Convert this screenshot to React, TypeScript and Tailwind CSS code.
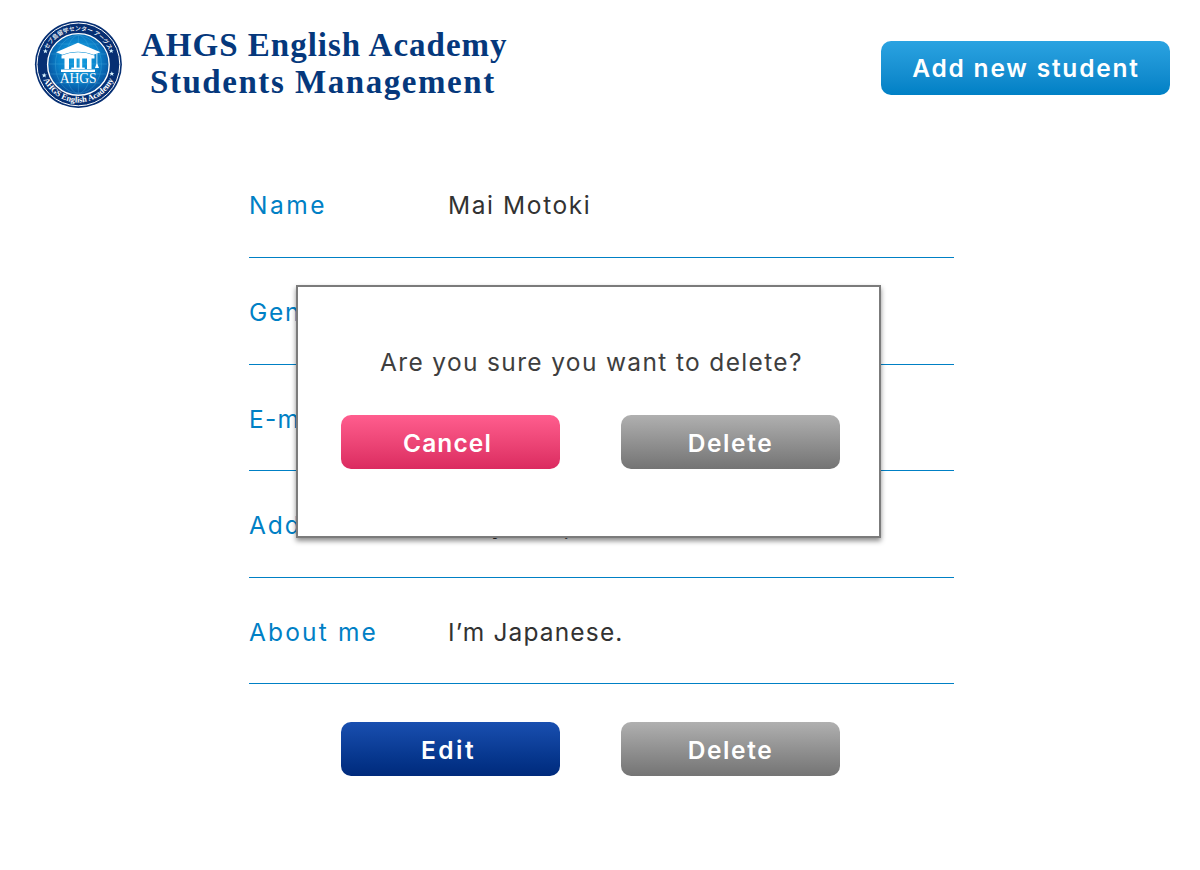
import type { ReactNode } from 'react';

function Logo() {
  return (
    <svg viewBox="0 0 88 88" className="h-[88px] w-[88px] shrink-0" aria-label="AHGS English Academy">
      <defs>
        <radialGradient id="globe" cx="50%" cy="42%" r="58%">
          <stop offset="0" stopColor="#16a0e0" />
          <stop offset="0.55" stopColor="#0b84cc" />
          <stop offset="1" stopColor="#064a98" />
        </radialGradient>
        <path id="arcTop" d="M10.7 50 A33.8 33.8 0 1 1 77.3 50" />
        <path id="arcBottom" d="M6 44 A38.4 38.4 0 0 0 82.8 44" />
      </defs>
      <circle cx="44.4" cy="44.4" r="43.5" fill="#062f73" />
      <circle cx="44.4" cy="44.4" r="41.4" fill="none" stroke="#fff" strokeWidth="1" />
      <circle cx="44.4" cy="44.4" r="30.8" fill="url(#globe)" stroke="#fff" strokeWidth="1.4" />
      <g fill="none" stroke="#62c4ef" strokeWidth="0.5" opacity="0.5">
        <ellipse cx="44.4" cy="44.4" rx="13" ry="29" />
        <ellipse cx="44.4" cy="44.4" rx="23" ry="29" />
        <path d="M44.4 15V73M16 34H72M15 44H73M16 54H72M22 63H66M23 24H65" />
      </g>
      <g fill="#fff">
        <path d="M44 22.8 66.5 32.3 59.5 34.8C50 30.8 38 30.8 28.5 34.8L22 32.3Z" />
        <path d="M27.5 35.5Q44 29 60.5 35.5V38.6H27.5Z" />
        <path d="M30.5 38H35V49H30.5ZM53 38H57.5V49H53ZM40 35.5H42.6V49H40ZM45.6 35.5H48.2V49H45.6Z" />
        <path d="M37.3 47.6H50.8V49H37.3Z" />
        <path d="M27 49.6H61V52H27Z" />
        <path d="M62.5 33.5H63.3V43.5L65 48H61L62.5 43.5Z" />
        <text x="44.2" y="62.8" textAnchor="middle" textLength="37" lengthAdjust="spacingAndGlyphs" fontSize="14" fontFamily="Liberation Serif, serif">AHGS</text>
        <text fontSize="5.8" fontWeight="500" fontFamily="Noto Sans CJK JP, sans-serif">
          <textPath href="#arcTop" startOffset="50.3%" textAnchor="middle">セブ島留学センター アーグス</textPath>
        </text>
        <text fontSize="8.4" fontWeight="700" fontFamily="Liberation Serif, serif">
          <textPath href="#arcBottom" startOffset="50%" textAnchor="middle">AHGS English Academy</textPath>
        </text>
      </g>
      <g fill="#d9f4ff">
        <path id="star" d="M0-2.6.7-.8 2.5-.8 1.1.3 1.6 2.1 0 1-1.6 2.1-1.1.3-2.5-.8-.7-.8Z" transform="translate(11.4 31.2)" />
        <use href="#star" x="-1.2" y="24.2" />
        <use href="#star" x="65.8" y="-0.2" />
        <use href="#star" x="66.4" y="22.6" />
      </g>
    </svg>
  );
}

const buttonTones = {
  sky: 'w-[289px] from-[#2aa3e1] to-[#0080c5] pl-px',
  navy: 'w-[219px] from-[#194fb0] to-[#002a7c] pt-[3px] pr-1',
  pink: 'w-[219px] from-[#ff5d8e] to-[#db2a60] pt-[3px] pr-1.5',
  gray: 'w-[219px] from-[#b0b0b0] to-[#747474] pt-[3px]',
};

function Button({ tone, tracking, children }: { tone: keyof typeof buttonTones; tracking: string; children: ReactNode }) {
  return (
    <button
      className={`flex h-[54px] items-center justify-center rounded-[10px] bg-linear-to-b text-[24.5px] font-semibold whitespace-nowrap text-white ${buttonTones[tone]}`}
    >
      <span className={tracking}>{children}</span>
    </button>
  );
}

const rows = [
  { label: 'Name', value: 'Mai Motoki', height: 'h-[107px]', labelTracking: 'tracking-[2.5px]', valueTracking: 'tracking-[1.6px]' },
  { label: 'Gender', value: 'Female', height: 'h-[107px]', labelTracking: 'tracking-[1.7px]', valueTracking: 'tracking-[1.6px]' },
  { label: 'E-mail', value: 'mai@ahgs.com', height: 'h-[106px]', labelTracking: 'tracking-[1.2px]', valueTracking: 'tracking-[1.6px]' },
  { label: 'Address', value: 'Tokyo, Japan', height: 'h-[107px]', labelTracking: 'tracking-[1.9px]', valueTracking: 'tracking-[0.4px]' },
  { label: 'About me', value: 'I’m Japanese.', height: 'h-[106px]', labelTracking: 'tracking-[2.15px]', valueTracking: 'tracking-[1.15px]' },
];

export default function App() {
  return (
    <div className="relative h-[870px] w-[1200px] overflow-hidden bg-white font-['Inter',sans-serif]">
      <header className="flex h-[151px] items-start justify-between pt-[20px] pr-[30px] pl-[34px]">
        <div className="flex">
          <Logo />
          <h1 className="mt-[7px] ml-[19px] font-['Liberation_Serif',serif] text-[33px] leading-[37px] font-bold whitespace-nowrap text-[#05387c]">
            <span className="block tracking-[1px]">AHGS English Academy</span>
            <span className="block pl-[9px] tracking-[1.55px]">Students Management</span>
          </h1>
        </div>
        <div className="mt-[21px]">
          <Button tone="sky" tracking="tracking-[1.8px]">Add new student</Button>
        </div>
      </header>

      <main className="ml-[249px] w-[705px]">
        <dl>
          {rows.map((row) => (
            <div key={row.label} className={`flex items-center border-b border-[#0080c5] pt-[3px] text-[24.5px] whitespace-nowrap ${row.height}`}>
              <dt className={`w-[199px] text-[#0080c5] ${row.labelTracking}`}>{row.label}</dt>
              <dd className={`text-[#323232] ${row.valueTracking}`}>{row.value}</dd>
            </div>
          ))}
        </dl>
        <div className="mt-[38px] ml-[92px] flex gap-[61px]">
          <Button tone="navy" tracking="tracking-[2.5px]">Edit</Button>
          <Button tone="gray" tracking="tracking-[1.6px]">Delete</Button>
        </div>
      </main>

      <div
        role="dialog"
        className="absolute top-[285px] left-[296px] h-[253px] w-[585px] border-2 border-[#7b7b7b] bg-white pt-[59px] shadow-[0_3px_5px_rgba(0,0,0,0.45)]"
      >
        <p className="pl-[82px] text-[24.5px] leading-8 whitespace-nowrap text-[#3e3e3e] tracking-[1.35px]">Are you sure you want to delete?</p>
        <div className="mt-[37px] ml-[43px] flex gap-[61px]">
          <Button tone="pink" tracking="tracking-[1.1px]">Cancel</Button>
          <Button tone="gray" tracking="tracking-[1.6px]">Delete</Button>
        </div>
      </div>
    </div>
  );
}
